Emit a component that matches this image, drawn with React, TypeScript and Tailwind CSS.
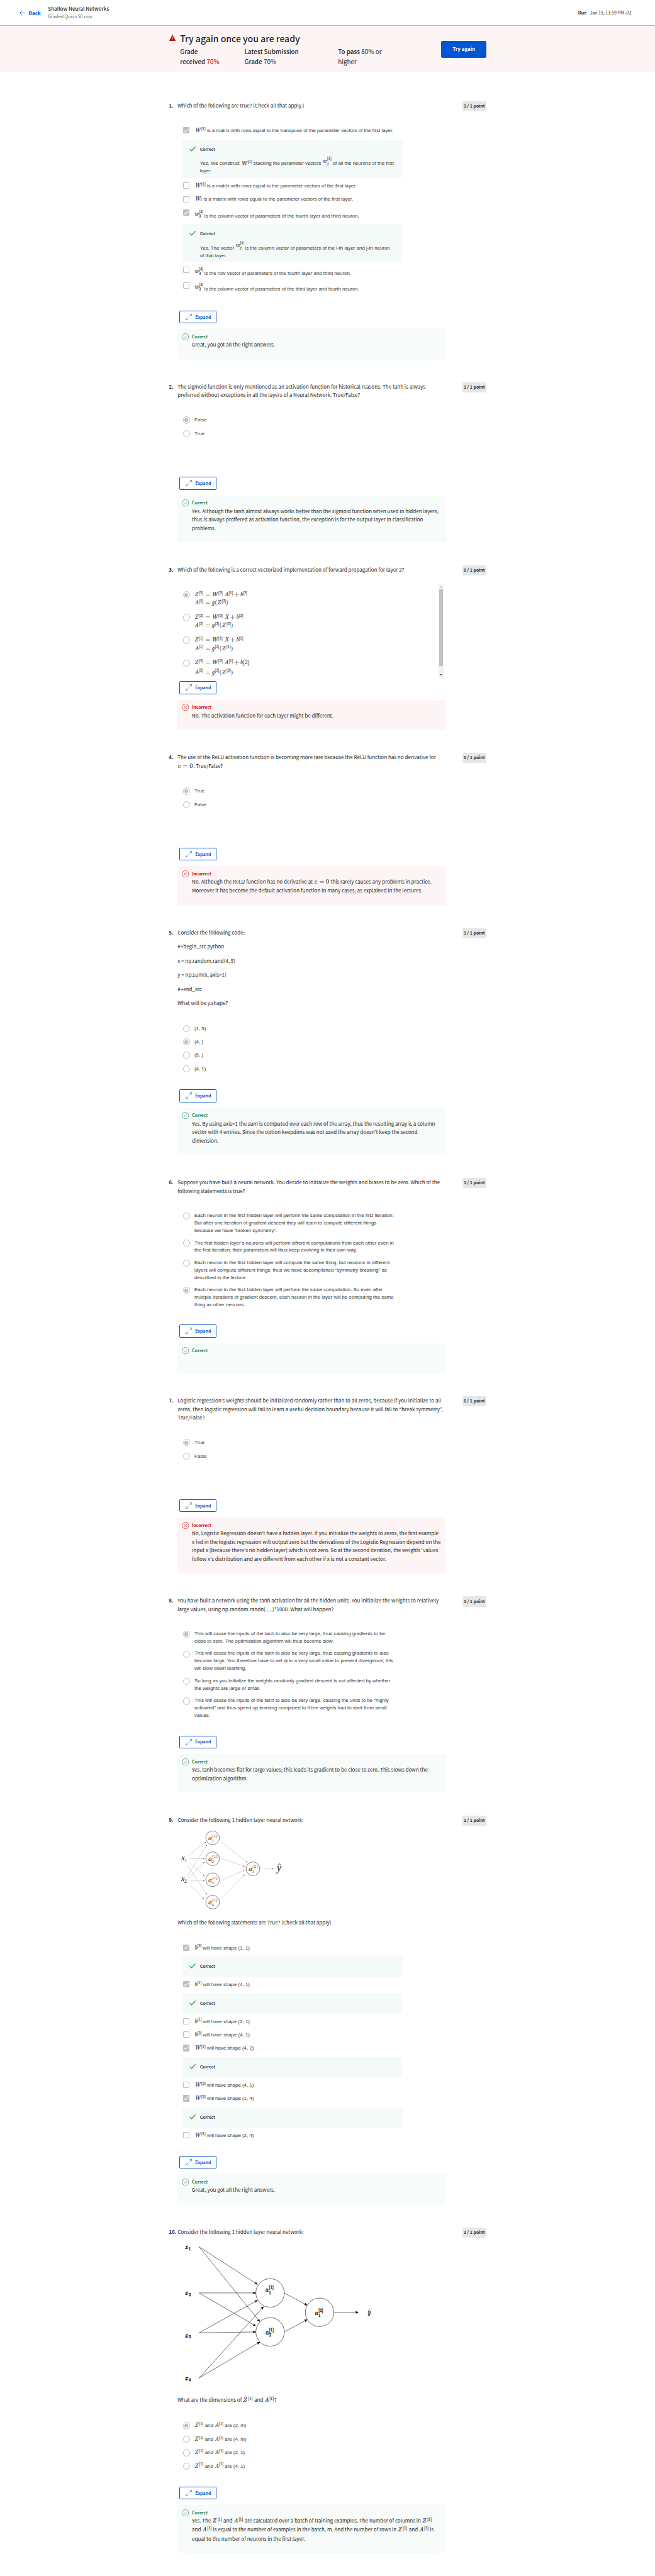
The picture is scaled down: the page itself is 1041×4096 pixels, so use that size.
import React, { type ReactNode } from "react";

const SANS = "font-['Noto_Sans_CJK_KR','Noto_Sans',sans-serif]";
const ARIAL = "font-['Liberation_Sans',Arial,sans-serif]";
const MATH = "font-['Latin_Modern_Roman','Latin_Modern_Math','Liberation_Serif',serif] [-webkit-text-stroke:0.35px]";

/* ---------- inline math ---------- */

/** One math symbol; `w` reserves its advance on the line. */
function V({ children, w = "", up = false }: { children: ReactNode; w?: string; up?: boolean }) {
  return (
    <span className={`${MATH} inline-block text-[1.21em] leading-[0] whitespace-nowrap ${up ? "" : "italic"} ${w}`}>
      {children}
    </span>
  );
}

function Sup({ children, w = "" }: { children: ReactNode; w?: string }) {
  return (
    <span className={`${MATH} inline-block align-[0.5em] text-[0.86em] leading-[0] whitespace-nowrap ${w}`}>
      {children}
    </span>
  );
}

function Sub({ children, w = "", italic = false }: { children: ReactNode; w?: string; italic?: boolean }) {
  return (
    <span className={`${MATH} inline-block align-[-0.2em] text-[0.86em] leading-[0] whitespace-nowrap ${italic ? "italic" : ""} ${w}`}>
      {children}
    </span>
  );
}

/** A raised variable with an upper and a lower index, e.g. w_3^[4]. */
function Indexed({ v, sup, sub, italicSup = false, italicSub = false, raise = "align-[4px]", w }: {
  v: string; sup: string; sub: string; italicSup?: boolean; italicSub?: boolean; raise?: string; w: string;
}) {
  return (
    <span className={`inline-block h-0 leading-[0] whitespace-nowrap ${raise} ${w}`}>
      <V w="w-[12.5px]">{v}</V>
      <span className={`${MATH} inline-block w-0 align-[8px] text-[12px] leading-[0]`}>
        [{italicSup ? <i>{sup}</i> : sup}]
      </span>
      <span className={`${MATH} inline-block align-[-5px] text-[12px] leading-[0] ${italicSub ? "italic" : ""}`}>{sub}</span>
    </span>
  );
}

/* ---------- icons ---------- */

function CheckMark() {
  return (
    <svg className="mt-5 h-[14px] w-[18px] shrink-0" viewBox="0 0 18 14" fill="none" stroke="#1F8354" strokeWidth="2">
      <path d="M0.8 7.4 L6.2 12.4 L17.2 0.8" />
    </svg>
  );
}

function ResultIcon({ ok }: { ok: boolean }) {
  return (
    <svg className="mt-3 h-5 w-5 shrink-0" viewBox="0 0 20 20" fill="none" stroke={ok ? "#1F8354" : "#D30001"} strokeWidth="1.1">
      <circle cx="10" cy="10" r="9.2" />
      {ok ? <path d="M5.8 10.6 L8.6 13.2 L14 6.8" /> : <path d="M6 6 L14 14 M14 6 L6 14" />}
    </svg>
  );
}

function ExpandIcon() {
  return (
    <svg className="h-[18px] w-[18px]" viewBox="0 0 18 18" fill="none" stroke="#0056D2" strokeWidth="1.1">
      <path d="M0.8 17.2 L8 10 M10 8 L17.2 0.8 M11.5 0.8 H17.2 V6.5 M0.8 11.5 V17.2 H6.5" />
    </svg>
  );
}

/* ---------- controls ---------- */

function Radio({ on = false, cls = "" }: { on?: boolean; cls?: string }) {
  return (
    <span className={`flex size-5 shrink-0 items-center justify-center rounded-full border-2 border-[#bdbdbd] ${cls}`}>
      {on && <span className="size-[11px] rounded-full bg-[#bdbdbd]" />}
    </span>
  );
}

function Check({ on = false }: { on?: boolean }) {
  return on ? (
    <span className="mx-px flex size-[18px] shrink-0 items-center justify-center rounded-[2px] bg-[#bdbdbd]">
      <svg className="h-[12px] w-[14px]" viewBox="0 0 14 12" fill="none" stroke="#fff" strokeWidth="2">
        <path d="M1 6.2 L5 10.2 L13 1.2" />
      </svg>
    </span>
  ) : (
    <span className="mx-px size-[18px] shrink-0 rounded-[2px] border-2 border-[#bdbdbd]" />
  );
}

function Row({ h, control, label = "", children }: { h: string; control: ReactNode; label?: string; children: ReactNode }) {
  return (
    <div className={`flex items-start gap-[12.5px] pl-[15px] ${h}`}>
      {control}
      <div className={`${ARIAL} text-[14px] leading-[21px] whitespace-nowrap text-[#373a3c] ${label}`}>{children}</div>
    </div>
  );
}

function Feedback({ h, children }: { h: string; children?: ReactNode }) {
  return (
    <div className={`mb-[13px] ml-[13px] flex w-[620px] items-start gap-[11px] bg-[#F4FAF8] pl-[21px] text-[#373a3c] ${ARIAL} ${h}`}>
      <CheckMark />
      <div className="whitespace-nowrap">
        <div className="mt-5 h-4 text-[12px] leading-4 font-bold">Correct</div>
        <div className="mt-4 text-[14px] leading-[21px]">{children}</div>
      </div>
    </div>
  );
}

function Expand() {
  return (
    <button className="ml-[5px] flex h-9 w-[105px] items-center gap-[9px] rounded-[3px] border border-[#0056D2] pl-4 text-[12.3px] leading-4 font-bold text-[#0056D2]">
      <ExpandIcon />
      Expand
    </button>
  );
}

function Result({ ok, h, children }: { ok: boolean; h: string; children?: ReactNode }) {
  return (
    <div className={`mt-4 flex w-[756px] items-start gap-[8.5px] pl-[12px] ${ok ? "bg-[#F7FBF9]" : "bg-[#FDF5F5]"} ${h}`}>
      <ResultIcon ok={ok} />
      <div className="whitespace-nowrap">
        <div className={`mt-[14px] h-4 text-[12.25px] leading-4 font-bold ${ok ? "text-[#1F8354]" : "text-[#D30001]"}`}>
          {ok ? "Correct" : "Incorrect"}
        </div>
        <div className="mt-[2px]">{children}</div>
      </div>
    </div>
  );
}

function L({ h = "h-6", children }: { h?: string; children: ReactNode }) {
  return <div className={`whitespace-nowrap ${h}`}>{children}</div>;
}

function Question({ n, score, h, result, children }: {
  n: number; score: number; h: string; result: ReactNode; children: ReactNode;
}) {
  return (
    <section className="mb-[66px] flex items-start text-[14.3px] leading-6">
      <div className="w-[25px] shrink-0 text-[14.2px] font-bold">{n}.</div>
      <div className="w-[803px] shrink-0">
        <div className={h}>{children}</div>
        <Expand />
        {result}
      </div>
      <div className="flex h-[29px] w-[68px] items-center justify-center rounded-[3px] bg-[#E5E7E8] text-[12.3px] font-bold whitespace-nowrap">
        {score} / 1 point
      </div>
    </section>
  );
}

/* ---------- question 3: equations ---------- */

type Cell = ["v" | "u" | "s", string, string];

function Eq({ cells, h = "h-[23px]" }: { cells: Cell[]; h?: string }) {
  return (
    <div className={`leading-[23px] ${h}`}>
      {cells.map(([kind, t, w], i) =>
        kind === "s" ? <Sup key={i} w={w}>{t}</Sup> : <V key={i} w={w} up={kind === "u"}>{t}</V>,
      )}
    </div>
  );
}

const lhs = (v: string, k: string): Cell[] => [
  ["v", v, "w-[12.3px]"], ["s", `[${k}]`, "w-[19px]"], ["u", "=", "w-[17.3px]"],
];
const zA: Cell[] = [
  ...lhs("Z", "2"), ["v", "W", "w-[18.5px]"], ["s", "[2]", "w-[17.2px]"], ["v", "A", "w-[12.4px]"],
  ["s", "[1]", "w-[16px]"], ["u", "+", "w-[16.3px]"], ["v", "b", "w-[8px]"],
];
const zX = (k: string): Cell[] => [
  ...lhs("Z", k), ["v", "W", "w-[18.5px]"], ["s", `[${k}]`, "w-[17.2px]"], ["v", "X", "w-[16.5px]"],
  ["u", "+", "w-[16.3px]"], ["v", "b", "w-[8px]"], ["s", `[${k}]`, ""],
];
const aG = (k: string): Cell[] => [
  ...lhs("A", k), ["v", "g", "w-[8.8px]"], ["s", `[${k}]`, "w-[12.8px]"], ["u", "(", "w-[6.8px]"],
  ["v", "Z", "w-[13px]"], ["s", `[${k}]`, "w-[12.8px]"], ["u", ")", ""],
];

function ScrollBar() {
  return (
    <div className="flex h-[264px] w-[15px] shrink-0 flex-col items-center bg-[#f1f1f1]">
      <div className="flex h-[15px] items-center">
        <span className="border-x-4 border-b-4 border-x-transparent border-b-[#a3a3a3]" />
      </div>
      <div className="h-[216px] w-[11px] bg-[#c1c1c1]" />
      <div className="mt-[18px] flex h-[15px] items-center">
        <span className="border-x-4 border-t-4 border-x-transparent border-t-[#505050]" />
      </div>
    </div>
  );
}

/* ---------- network diagrams ---------- */

const SMALL_EDGES: number[][] = [
  [30.6, 88.1, 80.2, 49.6], [34.9, 96.7, 75.9, 96.7], [33.7, 107, 75.9, 145.3], [26.9, 113.9, 83.3, 197.8],
  [27.5, 147, 83.3, 57], [31.8, 153, 76.5, 106], [34.9, 159.2, 75.9, 159.2], [36.1, 171.4, 74.7, 210.6],
  [123.7, 49.2, 196.5, 107], [124.3, 95.6, 189.2, 118.1], [123.7, 157.8, 189.2, 129.2],
  [123.7, 208.1, 189.2, 141.7], [243.6, 125.3, 270.6, 125.3],
];
const SMALL_NODES: [number, number, string, string][] = [
  [99.2, 37.4, "1", "1"], [99.2, 96.7, "2", "1"], [99.2, 156, "3", "1"], [99.2, 219.2, "4", "1"], [213, 125, "1", "2"],
];

function SmallNetwork() {
  return (
    <svg className="mb-[25px] block h-[240px] w-[320px] overflow-visible font-['Liberation_Serif',serif]" viewBox="0 0 320 240" fill="#111">
      <defs>
        <marker id="tip" viewBox="0 0 6 6" refX="5" refY="3" markerWidth="4" markerHeight="4" orient="auto">
          <path d="M0 0.5 L6 3 L0 5.5 Z" fill="#555" />
        </marker>
      </defs>
      {SMALL_EDGES.map(([a, b, c, d], i) => (
        <line key={i} x1={a} y1={b} x2={c} y2={d} stroke="#b9b9b9" strokeWidth="1.1" markerEnd="url(#tip)" />
      ))}
      {SMALL_NODES.map(([x, y, s, l], i) => (
        <g key={i}>
          <circle cx={x} cy={y} r="19.3" fill="none" stroke="#333" strokeWidth="1.1" />
          <text x={x - 12.4} y={y + 6.8} fontSize="20" fontStyle="italic">a</text>
          <text x={x - 2.6} y={y + 12.2} fontSize="12" fill="#444">{s}</text>
          <text x={x - 1.2} y={y - 2} fontSize="12" fill="#444" letterSpacing="0.3">[{l}]</text>
        </g>
      ))}
      <text x="11.2" y="100.5" fontSize="22" fontStyle="italic">x</text>
      <text x="20.4" y="105.6" fontSize="12">1</text>
      <text x="10.2" y="160" fontSize="22" fontStyle="italic">x</text>
      <text x="19.6" y="165.4" fontSize="13">2</text>
      <text x="280.4" y="132" fontSize="28" fontStyle="italic">y</text>
      <path d="M283.5 114 L287.6 110.8 L291.5 114" fill="none" stroke="#111" strokeWidth="1.3" />
    </svg>
  );
}

const BIG_EDGES: number[][] = [
  [61.2, 31.4, 225.9, 137.5], [61.2, 31.4, 232.6, 242.4], [61.2, 161.4, 221, 161.4], [61.2, 161.4, 221, 254.7],
  [61.2, 274, 225.9, 182], [61.2, 274, 221, 271.4], [61.2, 401.4, 243, 200], [61.2, 401.4, 232.6, 299.7],
  [301.2, 161.4, 366.1, 196.1], [301.2, 271.4, 366.1, 236.6], [441.4, 216, 510.6, 216],
];
const BIG_NODES: [number, number, number, number, string, string][] = [
  [261.4, 161.4, 247, 158.8, "1", "1"], [261.4, 271.4, 247.4, 278.8, "2", "1"], [401, 216, 386.8, 223.2, "1", "2"],
];
const BIG_INPUTS: [string, number][] = [["1", 37.2], ["2", 167.1], ["3", 286.7], ["4", 407.9]];

function BigNetwork() {
  return (
    <svg className={`block h-[451px] w-[560px] overflow-visible ${MATH}`} viewBox="0 0 560 451" fill="#000">
      <defs>
        <marker id="arrow" viewBox="0 0 9 8" refX="8.5" refY="4" markerWidth="9" markerHeight="8" markerUnits="userSpaceOnUse" orient="auto">
          <path d="M0 0 L9 4 L0 8 L2 4 Z" />
        </marker>
      </defs>
      {BIG_EDGES.map(([a, b, c, d], i) => (
        <line key={i} x1={a} y1={b} x2={c} y2={d} stroke="#000" strokeWidth="1" markerEnd="url(#arrow)" />
      ))}
      {BIG_NODES.map(([cx, cy, x, y, s, l], i) => (
        <g key={i} stroke="#000" strokeWidth="0.5">
          <circle cx={cx} cy={cy} r="40.2" fill="none" strokeWidth="1" />
          <text x={x} y={y} fontSize="18" fontStyle="italic">a</text>
          <text x={x + 11} y={y + 6} fontSize="13">{s}</text>
          <text x={x + 11} y={y - 9.2} fontSize="13">[{l}]</text>
        </g>
      ))}
      {BIG_INPUTS.map(([k, y]) => (
        <g key={k} stroke="#000" strokeWidth="0.6">
          <text x="21.2" y={y} fontSize="17" fontStyle="italic">x</text>
          <text x="31.4" y={y + 3} fontSize="12.5">{k}</text>
        </g>
      ))}
      <g stroke="#000" strokeWidth="0.5">
        <text x="536" y="221.4" fontSize="17" fontStyle="italic">y</text>
        <path d="M538.6 211 L541.4 208.6 L544 211" fill="none" strokeWidth="1" />
      </g>
    </svg>
  );
}

/* ---------- repeated math fragments ---------- */

const WMat = ({ k }: { k: string }) => (
  <><V w="w-[19px]">W</V><Sup w="w-[16.5px]">[{k}]</Sup></>
);
const BVec = ({ k }: { k: string }) => (
  <><V w="w-[7.8px]">b</V><Sup w="w-[16.2px]">[{k}]</Sup></>
);
const W34 = () => <Indexed v="w" sup="4" sub="3" w="w-[28px]" />;
const ZA = () => (
  <>
    <V w="w-[13px]">Z</V><Sup w="w-[12.7px]">[1]</Sup> and <V w="w-[12.4px]">A</V><Sup w="w-[12.7px]">[1]</Sup> are{" "}
  </>
);
const Z1 = () => <><V w="w-[14.6px]">Z</V><Sup w="w-[14px]">[1]</Sup></>;
const A1 = () => <><V w="w-[14px]">A</V><Sup w="w-[13.6px]">[1]</Sup></>;

export default function App() {
  return (
    <div className="h-[4096px] w-[1041px] overflow-hidden bg-white">
      <div className={`h-[7270px] w-[1848px] text-[#1f1f1f] [zoom:0.5634] ${SANS}`}>
        <header className="flex h-[73px] items-start border-b border-[#bbbbbb] pr-[67px] pl-[55px] whitespace-nowrap">
          <svg className="mt-[28px] h-4 w-4" viewBox="0 0 16 16" fill="none" stroke="#0056D2" strokeWidth="1.3">
            <path d="M16 8 H1 M7.5 1 L1 8 L7.5 15" />
          </svg>
          <div className="mt-[25px] ml-[10px] w-[54.5px] text-[14.15px] leading-6 font-bold text-[#0056D2]">Back</div>
          <div className="mt-[15px] flex-1">
            <div className="text-[14.3px] leading-[22px] font-medium">Shallow Neural Networks</div>
            <div className="text-[12.9px] leading-[21px] text-[#636363]">Graded Quiz • 50 min</div>
          </div>
          <div className="mt-[25px] flex gap-[9px] text-[12.5px] leading-6">
            <span className="font-bold">Due</span>
            <span>Jan 15, 11:59 PM -02</span>
          </div>
        </header>

        <div className="mb-20 flex h-[132px] items-start bg-[#FDF5F5] pl-[477px] whitespace-nowrap">
          <svg className="mt-[25px] h-[18px] w-[18px]" viewBox="0 0 18 18">
            <path d="M9 0 L18 17.6 H0 Z" fill="#D30001" />
            <path d="M9 6 V12 M9 13.6 V15.6" stroke="#fff" strokeWidth="1.6" />
          </svg>
          <div className="mt-[18px] ml-[13px] w-[736.5px]">
            <div className="text-[24.9px] leading-9 font-medium">Try again once you are ready</div>
            <div className="mt-[6px] flex text-[17.6px] leading-7 font-medium">
              <div className="w-[181.5px]">Grade<br />received <span className="font-normal text-[#D30001]">70%</span></div>
              <div className="w-[264px]">Latest Submission<br />Grade <span className="font-normal">70%</span></div>
              <div>To pass <span className="font-normal">80% or<br />higher</span></div>
            </div>
          </div>
          <button className="mt-[42px] flex h-12 w-[128px] items-center justify-center rounded-[4px] bg-[#0056D2] text-[14.15px] font-bold text-white">
            Try again
          </button>
        </div>

        <main className="pl-[476px]">
          <Question n={1} score={1} h="h-[592px]" result={<Result ok h="h-[84px]"><L>Great, you got all the right answers.</L></Result>}>
            <div className="mb-[50px]"><L>Which of the following are true? (Check all that apply.)</L></div>
            <Row h="h-[35px]" control={<Check on />}><WMat k="1" />is a matrix with rows equal to the transpose of the parameter vectors of the first layer.</Row>
            <Feedback h="h-[108px]">
              Yes. We construct <V w="w-[19px]">W</V><Sup w="w-[16.2px]">[1]</Sup>stacking the parameter vectors{" "}
              <Indexed v="w" sup="1" sub="j" italicSub raise="align-[7px]" w="w-[28.5px]" />of all the neurons of the first<br />layer.
            </Feedback>
            <Row h="h-[38px]" control={<Check />}><WMat k="1" />is a matrix with rows equal to the parameter vectors of the first layer.</Row>
            <Row h="h-[38px]" control={<Check />} label="-mt-px"><V w="w-[16px]">W</V><Sub w="w-[9.7px]">1</Sub>is a matrix with rows equal to the parameter vectors of the first layer.</Row>
            <Row h="h-[41px]" control={<Check on />} label="mt-[5px]"><W34 />is the column vector of parameters of the fourth layer and third neuron.</Row>
            <Feedback h="h-[108px]">
              Yes. The vector <Indexed v="w" sup="i" sub="j" italicSup italicSub raise="align-[8px]" w="w-[27px]" />is the column vector of parameters of the i-th layer and j-th neuron<br />of that layer.
            </Feedback>
            <Row h="h-[44px]" control={<Check />} label="mt-[5px]"><W34 />is the row vector of parameters of the fourth layer and third neuron.</Row>
            <Row h="h-[44px]" control={<Check />} label="mt-[5px]"><W34 />is the column vector of parameters of the third layer and fourth neuron.</Row>
          </Question>

          <Question n={2} score={1} h="h-[267px]" result={
            <Result ok h="h-[132px]">
              <L>Yes. Although the tanh almost always works better than the sigmoid function when used in hidden layers,</L>
              <L>thus is always proffered as activation function, the exception is for the output layer in classification</L>
              <L>problems.</L>
            </Result>
          }>
            <div className="mb-[49px]">
              <L>The sigmoid function is only mentioned as an activation function for historical reasons. The tanh is always</L>
              <L>preferred without exceptions in all the layers of a Neural Network. True/False?</L>
            </div>
            <Row h="h-[38px]" control={<Radio on />}>False</Row>
            <Row h="h-[38px]" control={<Radio />}>True</Row>
          </Question>

          <Question n={3} score={0} h="h-[327px]" result={<Result ok={false} h="h-[84px]"><L>No. The activation function for each layer might be different.</L></Result>}>
            <div className="mb-[29px]"><L>Which of the following is a correct vectorized implementation of forward propagation for layer 2?</L></div>
            <div className="flex h-[264px] w-[751px]">
              <div className="flex-1 pt-5">
                <Row h="h-[64px]" control={<Radio on />}>
                  <Eq cells={[...zA, ["s", "[2]", ""]]} />
                  <Eq cells={[...lhs("A", "2"), ["v", "g", "w-[8.8px]"], ["u", "(", "w-[6.5px]"], ["v", "Z", "w-[13px]"], ["s", "[2]", "w-[12.5px]"], ["u", ")", ""]]} />
                </Row>
                <Row h="h-[64px]" control={<Radio />}><Eq cells={zX("2")} /><Eq cells={aG("2")} /></Row>
                <Row h="h-[65px]" control={<Radio />}><Eq h="h-6" cells={zX("1")} /><Eq cells={aG("1")} /></Row>
                <Row h="h-[60px]" control={<Radio />} label="-mt-px">
                  <Eq h="h-[27px]" cells={[...zA, ["u", "[2]", ""]]} /><Eq cells={aG("2")} />
                </Row>
              </div>
              <ScrollBar />
            </div>
          </Question>

          <Question n={4} score={0} h="h-[268px]" result={
            <Result ok={false} h="h-[109px]">
              <L h="h-[25px]">
                No. Although the ReLU function has no derivative at <V w="w-[15.5px]">c</V><V up w="w-[18px]">=</V><V up w="w-[10px]">0</V> this rarely causes any problems in practice.
              </L>
              <L>Moreover it has become the default activation function in many cases, as explained in the lectures.</L>
            </Result>
          }>
            <div className="mb-[50px]">
              <L>The use of the ReLU activation function is becoming more rare because the ReLU function has no derivative for</L>
              <L><V w="w-[14.4px]">c</V><V up w="w-[19.6px]">=</V><V up w="w-[10.2px]">0</V>. True/False?</L>
            </div>
            <Row h="h-[38px]" control={<Radio on />}>True</Row>
            <Row h="h-[38px]" control={<Radio />}>False</Row>
          </Question>

          <Question n={5} score={1} h="h-[455px]" result={
            <Result ok h="h-[132px]">
              <L>Yes. By using axis=1 the sum is computed over each row of the array, thus the resulting array is a column</L>
              <L>vector with 4 entries. Since the option keepdims was not used the array doesn't keep the second</L>
              <L>dimension.</L>
            </Result>
          }>
            <div className="mb-[49px] flex flex-col gap-4">
              <L>Consider the following code:</L>
              <L>#+begin_src python</L>
              <L>x = np.random.rand(4, 5)</L>
              <L>y = np.sum(x, axis=1)</L>
              <L>#+end_src</L>
              <L>What will be y.shape?</L>
            </div>
            <Row h="h-[38px]" control={<Radio />}>(1, 5)</Row>
            <Row h="h-[38px]" control={<Radio on />}>(4, )</Row>
            <Row h="h-[38px]" control={<Radio />}>(5, )</Row>
            <Row h="h-[38px]" control={<Radio />}>(4, 1)</Row>
          </Question>

          <Question n={6} score={1} h="h-[414px]" result={<Result ok h="h-[84px]" />}>
            <div className="mb-[48px]">
              <L>Suppose you have built a neural network. You decide to initialize the weights and biases to be zero. Which of the</L>
              <L>following statements is true?</L>
            </div>
            <Row h="h-[77px]" control={<Radio cls="mt-px" />}>
              Each neuron in the first hidden layer will perform the same computation in the first iteration.<br />
              But after one iteration of gradient descent they will learn to compute different things<br />
              because we have “broken symmetry”.
            </Row>
            <Row h="h-[56px]" control={<Radio cls="mt-px" />}>
              The first hidden layer’s neurons will perform different computations from each other even in<br />
              the first iteration; their parameters will thus keep evolving in their own way.
            </Row>
            <Row h="h-[77px]" control={<Radio cls="mt-px" />}>
              Each neuron in the first hidden layer will compute the same thing, but neurons in different<br />
              layers will compute different things, thus we have accomplished “symmetry breaking” as<br />
              described in the lecture.
            </Row>
            <Row h="h-[77px]" control={<Radio on cls="mt-px" />}>
              Each neuron in the first hidden layer will perform the same computation. So even after<br />
              multiple iterations of gradient descent, each neuron in the layer will be computing the same<br />
              thing as other neurons.
            </Row>
          </Question>

          <Question n={7} score={0} h="h-[291px]" result={
            <Result ok={false} h="h-[156px]">
              <L>No, Logistic Regression doesn't have a hidden layer. If you initialize the weights to zeros, the first example</L>
              <L>x fed in the logistic regression will output zero but the derivatives of the Logistic Regression depend on the</L>
              <L>input x (because there's no hidden layer) which is not zero. So at the second iteration, the weights’ values</L>
              <L>follow x's distribution and are different from each other if x is not a constant vector.</L>
            </Result>
          }>
            <div className="mb-[49px]">
              <L>Logistic regression’s weights should be initialized randomly rather than to all zeros, because if you initialize to all</L>
              <L>zeros, then logistic regression will fail to learn a useful decision boundary because it will fail to “break symmetry”,</L>
              <L>True/False?</L>
            </div>
            <Row h="h-[38px]" control={<Radio on />}>True</Row>
            <Row h="h-[38px]" control={<Radio />}>False</Row>
          </Question>

          <Question n={8} score={1} h="h-[393px]" result={
            <Result ok h="h-[108px]">
              <L>Yes. tanh becomes flat for large values; this leads its gradient to be close to zero. This slows down the</L>
              <L>optimization algorithm.</L>
            </Result>
          }>
            <div className="mb-[48px]">
              <L>You have built a network using the tanh activation for all the hidden units. You initialize the weights to relatively</L>
              <L>large values, using np.random.randn(..,..)*1000. What will happen?</L>
            </div>
            <Row h="h-[56px]" control={<Radio on cls="mt-px" />} label="-mt-px">
              This will cause the inputs of the tanh to also be very large, thus causing gradients to be<br />
              close to zero. The optimization algorithm will thus become slow.
            </Row>
            <Row h="h-[77px]" control={<Radio cls="mt-px" />} label="-mt-px">
              This will cause the inputs of the tanh to also be very large, thus causing gradients to also<br />
              become large. You therefore have to set <V w="w-[10px]">α</V> to a very small value to prevent divergence; this<br />
              will slow down learning.
            </Row>
            <Row h="h-[56px]" control={<Radio cls="mt-px" />} label="-mt-px">
              So long as you initialize the weights randomly gradient descent is not affected by whether<br />
              the weights are large or small.
            </Row>
            <Row h="h-[77px]" control={<Radio cls="mt-px" />} label="-mt-px">
              This will cause the inputs of the tanh to also be very large, causing the units to be “highly<br />
              activated” and thus speed up learning compared to if the weights had to start from small<br />
              values.
            </Row>
          </Question>

          <Question n={9} score={1} h="h-[960px]" result={<Result ok h="h-[84px]"><L>Great, you got all the right answers.</L></Result>}>
            <L>Consider the following 1 hidden layer neural network:</L>
            <SmallNetwork />
            <div className="mb-[50px]"><L>Which of the following statements are True? (Check all that apply).</L></div>
            <Row h="h-[35px]" control={<Check on />}><BVec k="2" />will have shape (1, 1)</Row>
            <Feedback h="h-[56px]" />
            <Row h="h-[35px]" control={<Check on />}><BVec k="1" />will have shape (4, 1)</Row>
            <Feedback h="h-[56px]" />
            <Row h="h-[38px]" control={<Check />}><BVec k="1" />will have shape (2, 1)</Row>
            <Row h="h-[38px]" control={<Check />}><BVec k="2" />will have shape (4, 1)</Row>
            <Row h="h-[35px]" control={<Check on />}><WMat k="1" />will have shape (4, 2)</Row>
            <Feedback h="h-[56px]" />
            <Row h="h-[38px]" control={<Check />}><WMat k="2" />will have shape (4, 1)</Row>
            <Row h="h-[35px]" control={<Check on />}><WMat k="2" />will have shape (1, 4)</Row>
            <Feedback h="h-[56px]" />
            <Row h="h-[38px]" control={<Check />}><WMat k="1" />will have shape (2, 4)</Row>
          </Question>

          <Question n={10} score={1} h="h-[732px]" result={
            <Result ok h="h-[134px]">
              <L h="h-[25px]">
                Yes. The <Z1 /> and <A1 /> are calculated over a batch of training examples. The number of columns in <Z1 />
              </L>
              <L h="h-[25px]">
                and <A1 /> is equal to the number of examples in the batch, m. And the number of rows in <Z1 /> and <A1 /> is
              </L>
              <L>equal to the number of neurons in the first layer.</L>
            </Result>
          }>
            <L>Consider the following 1 hidden layer neural network:</L>
            <BigNetwork />
            <div className="mb-[51px]"><L>What are the dimensions of <Z1 /> and <A1 />?</L></div>
            <Row h="h-[38px]" control={<Radio on />}><ZA />(2, m)</Row>
            <Row h="h-[38px]" control={<Radio />}><ZA />(4, m)</Row>
            <Row h="h-[38px]" control={<Radio />}><ZA />(2, 1)</Row>
            <Row h="h-[38px]" control={<Radio />}><ZA />(4, 1)</Row>
          </Question>
        </main>
      </div>
    </div>
  );
}
